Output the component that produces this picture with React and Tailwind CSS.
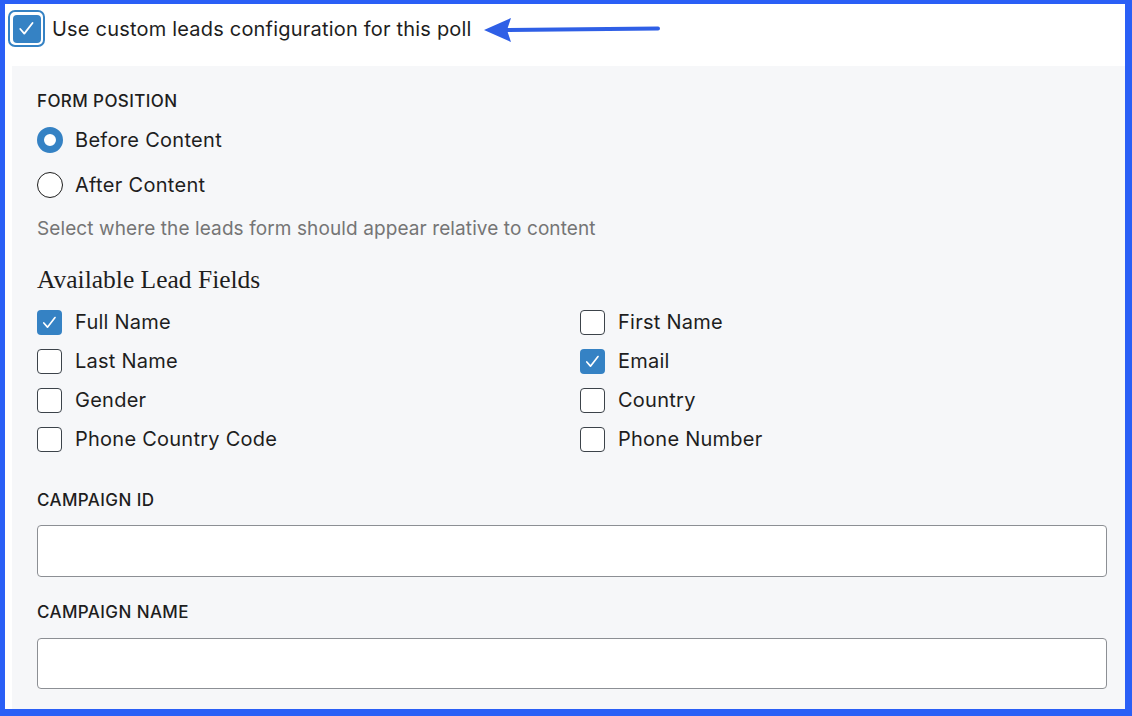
import React from "react";

const sans = "font-['Inter','Noto_Sans',sans-serif]";

function Check({ className }) {
  return (
    <svg viewBox="0 0 24 24" className={className} fill="none" stroke="white" strokeWidth="1.9" strokeLinecap="round" strokeLinejoin="round">
      <path d="M5.5 12.5l4.2 4.8 8.6-11" />
    </svg>
  );
}

function Box({ checked }) {
  if (checked) {
    return (
      <span className="flex h-[25px] w-[25px] shrink-0 items-center justify-center rounded-[4px] bg-[#3582c4]">
        <Check className="h-[21px] w-[21px]" />
      </span>
    );
  }
  return <span className="h-[25px] w-[25px] shrink-0 rounded-[4px] border border-[#3c434a] bg-white" />;
}

function Radio({ checked, label }) {
  return (
    <div className="flex h-[26px] items-center gap-[12px]">
      {checked ? (
        <span className="h-[26px] w-[26px] rounded-full border-[7px] border-[#3582c4] bg-white" />
      ) : (
        <span className="h-[26px] w-[26px] rounded-full border border-[#1e1e1e] bg-white" />
      )}
      <span className="text-[20px] leading-[26px] tracking-[0.3px] text-[#1e1e1e]">{label}</span>
    </div>
  );
}

const fields = [
  ["Full Name", true],
  ["First Name", false],
  ["Last Name", false],
  ["Email", true],
  ["Gender", false],
  ["Country", false],
  ["Phone Country Code", false],
  ["Phone Number", false],
];

const label = "text-[17px] leading-[24px] font-medium tracking-[0.4px] text-[#1e1e1e]";

export default function App() {
  return (
    <div className={`h-[716px] w-[1132px] overflow-hidden border-t-[4px] border-r-[7px] border-b-[7px] border-l-[5px] border-[#2a5ff6] bg-white ${sans}`}>
      <div className="flex h-[62px] items-start pt-[6px] pl-[3px]">
        <span className="flex h-[37px] w-[37px] items-center justify-center rounded-[7px] border-[2px] border-[#3582c4] bg-white">
          <span className="flex h-[28px] w-[28px] items-center justify-center rounded-[4px] bg-[#3582c4]">
            <Check className="h-[23px] w-[23px]" />
          </span>
        </span>
        <span className="ml-[7px] mt-[5px] text-[20px] leading-[28px] tracking-[0.2px] text-[#1e1e1e]">
          Use custom leads configuration for this poll
        </span>
        <svg className="ml-[10px] mt-[6px]" width="180" height="28" viewBox="0 0 180 28">
          <line x1="24" y1="14" x2="176" y2="12.5" stroke="#2f5fe6" strokeWidth="4" strokeLinecap="round" />
          <path d="M2 14 L29 2 L25 14 L29 26 Z" fill="#2f5fe6" />
        </svg>
      </div>

      <div className="ml-[7px] flex h-[643px] flex-col bg-[#f6f7f9] pt-[23px] pr-[18px] pl-[25px]">
        <div className={label}>FORM POSITION</div>
        <div className="mt-[14px]">
          <Radio checked label="Before Content" />
        </div>
        <div className="mt-[19px]">
          <Radio label="After Content" />
        </div>
        <div className="mt-[19px] text-[19px] leading-[24px] tracking-[0.1px] text-[#757575]">
          Select where the leads form should appear relative to content
        </div>
        <div className="mt-[23px] font-['Liberation_Serif',serif] text-[25.5px] leading-[32px] text-[#1e1e1e]">
          Available Lead Fields
        </div>
        <div className="mt-[13px] grid grid-cols-2 gap-x-[16px] gap-y-[13px]">
          {fields.map(([name, checked]) => (
            <div key={name} className="flex h-[26px] items-center gap-[13px]">
              <Box checked={checked} />
              <span className="text-[20px] leading-[26px] tracking-[0.25px] text-[#1e1e1e]">{name}</span>
            </div>
          ))}
        </div>
        <div className={`mt-[36px] ${label}`}>CAMPAIGN ID</div>
        <input className="mt-[13px] h-[52px] w-full rounded-[4px] border border-[#8c8f94] bg-white outline-none" />
        <div className={`mt-[23px] ${label}`}>CAMPAIGN NAME</div>
        <input className="mt-[14px] h-[51px] w-full rounded-[4px] border border-[#8c8f94] bg-white outline-none" />
      </div>
    </div>
  );
}
